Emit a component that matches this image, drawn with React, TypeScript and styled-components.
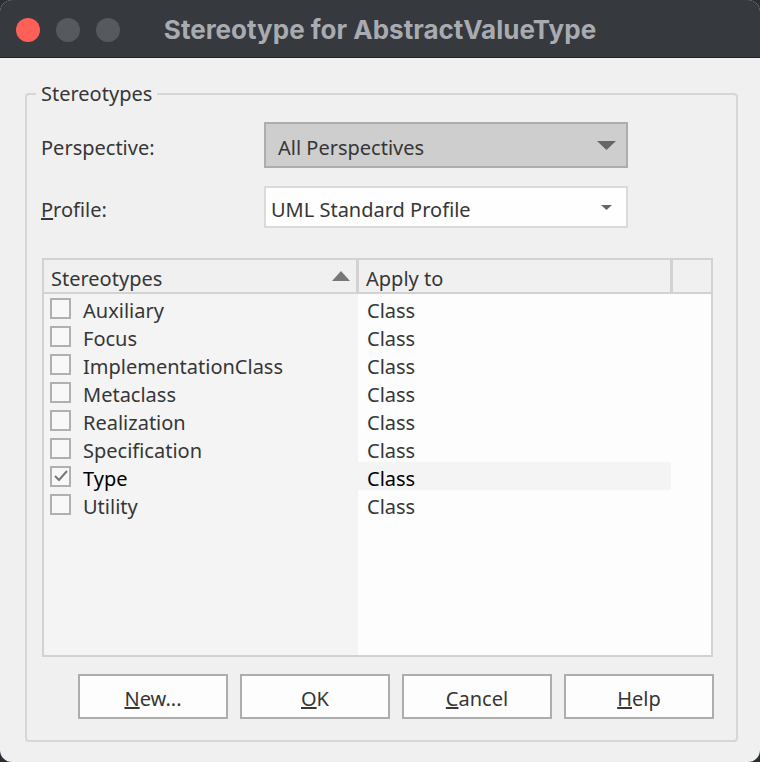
import React from "react";
import styled, { createGlobalStyle } from "styled-components";

const GlobalStyle = createGlobalStyle`
  html, body {
    margin: 0;
    padding: 0;
    background: #2c2e31;
  }
  * {
    box-sizing: border-box;
  }
`;

type Row = { name: string; applyTo: string; checked?: boolean };

const rows: Row[] = [
  { name: "Auxiliary", applyTo: "Class" },
  { name: "Focus", applyTo: "Class" },
  { name: "ImplementationClass", applyTo: "Class" },
  { name: "Metaclass", applyTo: "Class" },
  { name: "Realization", applyTo: "Class" },
  { name: "Specification", applyTo: "Class" },
  { name: "Type", applyTo: "Class", checked: true },
  { name: "Utility", applyTo: "Class" },
];

const DropArrow = ({ small }: { small?: boolean }) =>
  small ? (
    <svg width="11" height="5" viewBox="0 0 11 5">
      <path d="M0 0 H11 L5.5 5 Z" fill="#666" />
    </svg>
  ) : (
    <svg width="19" height="9" viewBox="0 0 19 9">
      <path d="M0 0 H19 L9.5 9 Z" fill="#666" />
    </svg>
  );

const SortArrow = () => (
  <svg width="18" height="10" viewBox="0 0 18 10">
    <path d="M0 10 L9 0 L18 10 Z" fill="#777" />
  </svg>
);

const CheckMark = () => (
  <svg width="14" height="12" viewBox="0 0 14 12">
    <path d="M1 6 L5 10 L13 1" fill="none" stroke="#777" strokeWidth="2" />
  </svg>
);

export default function App() {
  return (
    <>
      <GlobalStyle />
      <Window>
        <TitleBar>
          <Lights>
            <Light color="#fe5f57" />
            <Light color="#56595e" />
            <Light color="#56595e" />
          </Lights>
          <Title>Stereotype for AbstractValueType</Title>
        </TitleBar>
        <Body>
          <Group>
            <Legend>Stereotypes</Legend>
            <FieldRow $top={16}>
              <Label>Perspective:</Label>
              <Select $disabled>
                <span>All Perspectives</span>
                <DropArrow />
              </Select>
            </FieldRow>
            <FieldRow $top={18}>
              <Label>
                <u>P</u>rofile:
              </Label>
              <Select>
                <span>UML Standard Profile</span>
                <DropArrow small />
              </Select>
            </FieldRow>
            <Table>
              <Header>
                <HeadCell $width={315}>
                  <span>Stereotypes</span>
                  <SortArrow />
                </HeadCell>
                <HeadCell $width={314}>
                  <span>Apply to</span>
                </HeadCell>
                <HeadFiller />
              </Header>
              <TableBody>
                <NameColumn>
                  {rows.map((r) => (
                    <NameCell key={r.name} $selected={r.checked}>
                      <Box>{r.checked && <CheckMark />}</Box>
                      {r.name}
                    </NameCell>
                  ))}
                </NameColumn>
                <ApplyColumn>
                  {rows.map((r) => (
                    <ApplyCell key={r.name} $selected={r.checked}>
                      {r.applyTo}
                    </ApplyCell>
                  ))}
                </ApplyColumn>
              </TableBody>
            </Table>
            <Buttons>
              <Button>
                <u>N</u>ew...
              </Button>
              <Button>
                <u>O</u>K
              </Button>
              <Button>
                <u>C</u>ancel
              </Button>
              <Button>
                <u>H</u>elp
              </Button>
            </Buttons>
          </Group>
        </Body>
      </Window>
    </>
  );
}

const Window = styled.div`
  width: 760px;
  height: 762px;
  border-radius: 12px;
  overflow: hidden;
  background: #f0f0f0;
  display: flex;
  flex-direction: column;
  font-family: "Noto Sans", "Open Sans", sans-serif;
  font-size: 20px;
  color: #363636;
`;

const TitleBar = styled.div`
  position: relative;
  height: 58px;
  flex: none;
  background: #36393e;
  border-bottom: 1px solid #1f2023;
  display: flex;
  align-items: center;
  justify-content: center;
`;

const Lights = styled.div`
  position: absolute;
  left: 16px;
  top: 18px;
  display: flex;
  gap: 16px;
`;

const Light = styled.div<{ color: string }>`
  width: 24px;
  height: 24px;
  border-radius: 50%;
  background: ${({ color }) => color};
`;

const Title = styled.div`
  font-family: Inter, "Noto Sans", sans-serif;
  font-weight: 700;
  font-size: 26px;
  color: #a8abaf;
  padding-top: 2px;
`;

const Body = styled.div`
  flex: 1;
  padding: 24px 22px 20px 25px;
  display: flex;
`;

const Group = styled.fieldset`
  flex: 1;
  margin: 0;
  border: 2px solid #d6d6d6;
  border-radius: 4px;
  padding: 0 22px 19px 14px;
  display: flex;
  flex-direction: column;
`;

const Legend = styled.legend`
  padding: 0 5px;
  margin-left: -5px;
  line-height: 24px;
`;

const FieldRow = styled.div<{ $top: number }>`
  display: flex;
  align-items: center;
  margin-top: ${({ $top }) => $top}px;
`;

const Label = styled.div`
  width: 223px;
  padding-top: 4px;
`;

const Select = styled.div<{ $disabled?: boolean }>`
  width: 364px;
  height: ${({ $disabled }) => ($disabled ? 46 : 42)}px;
  display: flex;
  align-items: center;
  justify-content: space-between;
  padding: ${({ $disabled }) => ($disabled ? "0 10px 0 12px" : "0 14px 0 5px")};
  background: ${({ $disabled }) => ($disabled ? "#cecece" : "#fefefe")};
  border: 2px solid ${({ $disabled }) => ($disabled ? "#adadad" : "#dadada")};

  > span {
    padding-top: 4px;
  }
`;

const Table = styled.div`
  margin: 30px 1px 0 1px;
  height: 399px;
  border: 2px solid #d2d2d2;
  display: flex;
  flex-direction: column;
`;

const Header = styled.div`
  height: 34px;
  flex: none;
  display: flex;
  background: #f0f0f0;
  border-bottom: 2px solid #d2d2d2;
`;

const HeadCell = styled.div<{ $width: number }>`
  width: ${({ $width }) => $width}px;
  display: flex;
  align-items: center;
  justify-content: space-between;
  padding: 0 6px 0 7px;
  border-right: 3px solid #d2d2d2;

  > span {
    padding-top: 4px;
  }
`;

const HeadFiller = styled.div`
  flex: 1;
`;

const TableBody = styled.div`
  flex: 1;
  display: flex;
`;

const NameColumn = styled.div`
  width: 314px;
  background: #f4f4f4;
  display: flex;
  flex-direction: column;
`;

const ApplyColumn = styled.div`
  flex: 1;
  background: #fdfdfd;
  display: flex;
  flex-direction: column;
`;

const NameCell = styled.div<{ $selected?: boolean }>`
  height: 28px;
  display: flex;
  align-items: center;
  padding: 4px 0 0 6px;
  gap: 12px;
  color: ${({ $selected }) => ($selected ? "#000" : "#363636")};
`;

const ApplyCell = styled.div<{ $selected?: boolean }>`
  height: 28px;
  width: 313px;
  display: flex;
  align-items: center;
  padding: 4px 0 0 9px;
  background: ${({ $selected }) => ($selected ? "#f4f4f4" : "transparent")};
  color: ${({ $selected }) => ($selected ? "#000" : "#363636")};
`;

const Box = styled.div`
  width: 21px;
  height: 21px;
  margin-top: -4px;
  border: 2px solid #b0b0b0;
  background: #f8f8f8;
  display: flex;
  align-items: center;
  justify-content: center;
`;

const Buttons = styled.div`
  margin-top: 17px;
  display: flex;
  justify-content: flex-end;
  gap: 12px;
`;

const Button = styled.div`
  width: 150px;
  height: 45px;
  padding-top: 4px;
  background: #fdfdfd;
  border: 2px solid #adadad;
  display: flex;
  align-items: center;
  justify-content: center;
  color: #363636;
`;
